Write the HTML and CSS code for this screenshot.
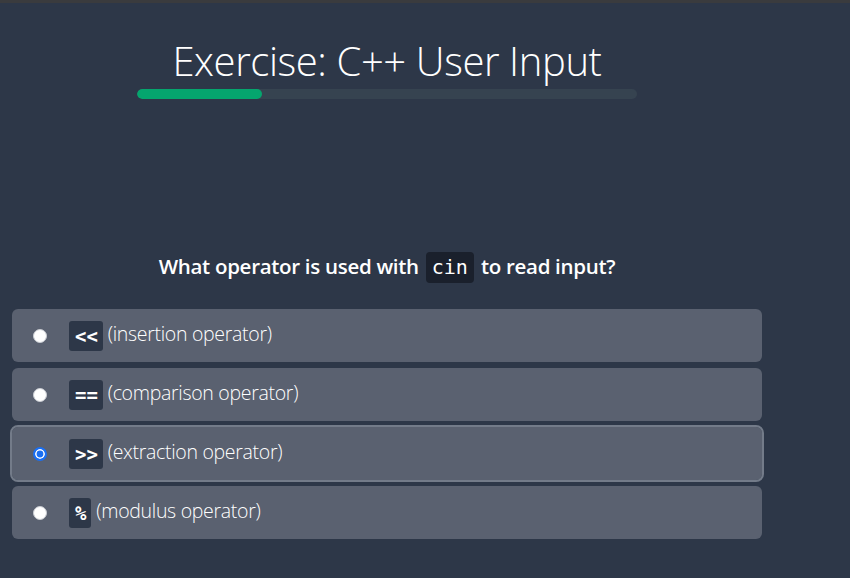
FILE: index.html
```html
<!DOCTYPE html>
<html lang="en">
<head>
<meta charset="utf-8">
<title>Exercise: C++ User Input</title>
<link rel="stylesheet" href="styles.css">
</head>
<body>
<div class="topbar"></div>
<main class="quiz">
  <header class="quiz-head">
    <h1 class="title">Exercise: C++ User Input</h1>
    <div class="progress"><div class="progress-fill" style="width:25%"></div></div>
  </header>
  <p class="question">What operator is used with <code class="q-code">cin</code> to read input?</p>
  <form class="options">
    <label class="option">
      <input type="radio" name="ans" class="radio">
      <span class="opt-text"><code class="chip">&lt;&lt;</code> (insertion operator)</span>
    </label>
    <label class="option">
      <input type="radio" name="ans" class="radio">
      <span class="opt-text"><code class="chip">==</code> (comparison operator)</span>
    </label>
    <label class="option selected">
      <input type="radio" name="ans" class="radio" checked>
      <span class="opt-text"><code class="chip">&gt;&gt;</code> (extraction operator)</span>
    </label>
    <label class="option">
      <input type="radio" name="ans" class="radio">
      <span class="opt-text"><code class="chip">%</code> (modulus operator)</span>
    </label>
  </form>
</main>
</body>
</html>
```
FILE: styles.css
```css
html, body {
  margin: 0;
  padding: 0;
  background: #2d3748;
  height: 100%;
}
body {
  font-family: "Open Sans", "Noto Sans", sans-serif;
  color: #ffffff;
  overflow: hidden;
}
.topbar {
  height: 3px;
  background: #3a3b3e;
}
.quiz {
  width: 750px;
  margin-left: 12px;
  display: flex;
  flex-direction: column;
  align-items: center;
}
.quiz-head {
  display: flex;
  flex-direction: column;
  align-items: center;
  padding-top: 33px;
}
.title {
  margin: 0;
  font-weight: 300;
  font-size: 40px;
  line-height: 49px;
  letter-spacing: -0.4px;
}
.progress {
  margin-top: 4px;
  width: 500px;
  height: 10px;
  border-radius: 5px;
  background: #364350;
  overflow: hidden;
}
.progress-fill {
  height: 100%;
  background: #05a56e;
  border-radius: 5px;
}
.question {
  margin: 152px 0 0;
  font-size: 20.5px;
  font-weight: 600;
  line-height: 31px;
  letter-spacing: -0.3px;
}
.q-code {
  display: inline-block;
  font-family: "DejaVu Sans Mono", monospace;
  font-weight: 400;
  font-size: 20px;
  line-height: 31px;
  padding: 0 6px;
  background: #1a202c;
  border-radius: 4px;
  margin: 0 2px;
  letter-spacing: 0;
}
.options {
  margin-top: 26px;
  width: 100%;
  display: flex;
  flex-direction: column;
  gap: 6px;
}
.option {
  display: flex;
  align-items: center;
  height: 53px;
  background: #5a6170;
  border-radius: 6px;
  padding-left: 21px;
  box-sizing: border-box;
}
.option.selected {
  outline: 2px solid #737b89;
  outline-offset: 0;
}
.radio {
  appearance: none;
  -webkit-appearance: none;
  width: 14px;
  height: 14px;
  margin: 0;
  border-radius: 50%;
  background: #ffffff;
  border: 1px solid #c9ccd2;
  box-sizing: border-box;
}
.radio:checked {
  border: 2.5px solid #1a6ff2;
  background: #1a6ff2;
  box-shadow: inset 0 0 0 1.6px #ffffff;
}
.opt-text {
  margin-left: 22px;
  font-size: 19.5px;
  font-weight: 300;
  letter-spacing: -0.3px;
}
.chip {
  display: inline-block;
  font-family: "DejaVu Sans Mono", monospace;
  font-size: 19px;
  font-weight: 700;
  line-height: 30px;
  padding: 0 5px 0 6px;
  background: #2d3748;
  border-radius: 3px;
  vertical-align: middle;
  letter-spacing: 0;
}
```
